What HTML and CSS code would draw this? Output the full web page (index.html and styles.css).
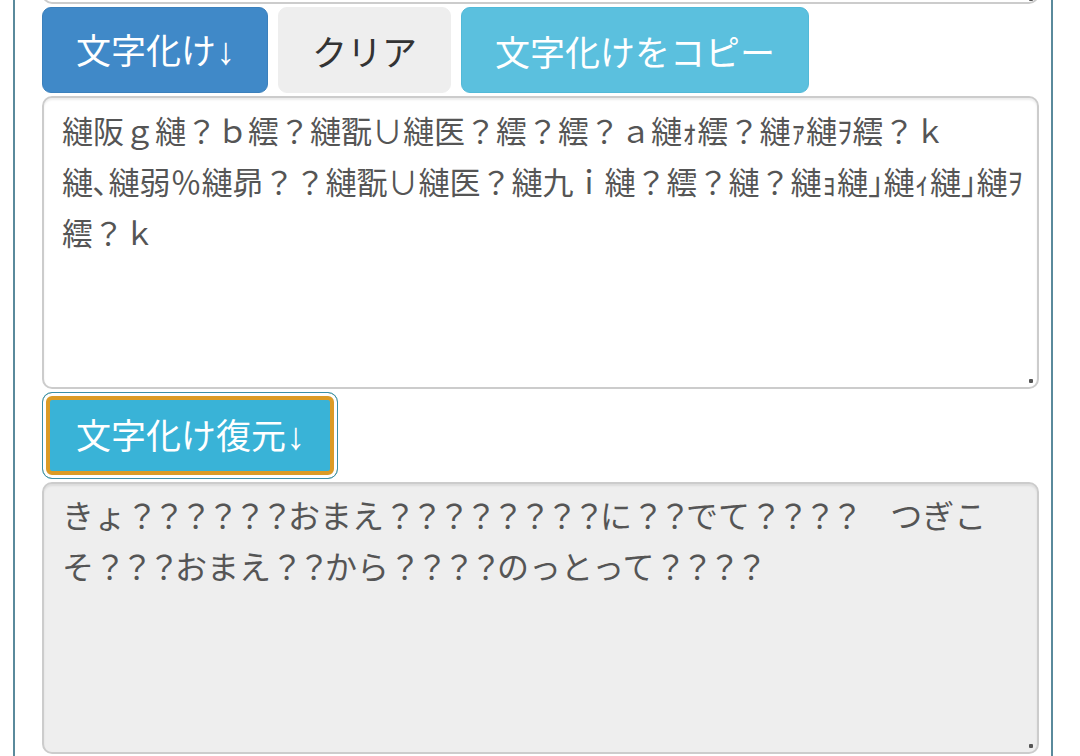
FILE: index.html
```html
<!DOCTYPE html>
<html lang="ja">
<head>
<meta charset="utf-8">
<title>文字化け</title>
<link rel="stylesheet" href="styles.css">
</head>
<body>
<div class="page">
  <div class="panel">
    <div class="field field-prev">
      <textarea class="ta ta-prev" readonly></textarea>
      <span class="grip"></span>
    </div>
    <div class="btn-row">
      <button class="btn btn-primary">文字化け<span class="arrow">↓</span></button>
      <button class="btn btn-default">クリア</button>
      <button class="btn btn-info">文字化けをコピー</button>
    </div>
    <div class="field field-src">
      <textarea class="ta ta-src">縺阪ｇ縺？ｂ繧？縺翫∪縺医？繧？繧？ａ縺ｫ繧？縺ｧ縺ｦ繧？ｋ
縺､縺弱％縺昴？？縺翫∪縺医？縺九ｉ縺？繧？縺？縺ｮ縺｣縺ｨ縺｣縺ｦ
繧？ｋ</textarea>
      <span class="grip"></span>
    </div>
    <div class="btn-row">
      <button class="btn btn-restore">文字化け復元<span class="arrow">↓</span></button>
    </div>
    <div class="field field-out">
      <div class="ta ta-out" role="textbox" aria-readonly="true">きょ<span class="q">？？？？？？</span>おまえ<span class="q">？？？？？？？？</span>に<span class="q">？？</span>でて<span class="q">？？？？</span>　つぎこ<br>そ<span class="q">？？？</span>おまえ<span class="q">？？</span>から<span class="q">？？？？</span>のっとって<span class="q">？？？？</span></div>
      <span class="grip"></span>
    </div>
    <div class="next"></div>
  </div>
</div>
</body>
</html>
```
FILE: styles.css
```css
html, body {
  margin: 0;
  padding: 0;
  background: #ffffff;
  overflow: hidden;
}
body {
  font-family: "Noto Sans CJK JP", "Roboto", sans-serif;
  color: #555555;
}
.page {
  padding-left: 13px;
  width: 1040px;
}
.panel {
  border-left: 2px solid #5a8a9c;
  border-right: 2px solid #5a8a9c;
  padding: 0 12px 0 27px;
  height: 760px;
  display: flex;
  flex-direction: column;
}
.field {
  position: relative;
  flex: none;
}
.ta {
  display: block;
  box-sizing: border-box;
  width: 997px;
  height: 100%;
  margin: 0;
  padding: 6px 8px 6px 18px;
  border: 2px solid #cccccc;
  border-radius: 10px;
  box-shadow: inset 0 2px 2px rgba(0, 0, 0, 0.075);
  font-family: "Noto Sans CJK JP", sans-serif;
  font-size: 31px;
  line-height: 51px;
  color: #555555;
  background: #ffffff;
  resize: none;
  outline: none;
  overflow: hidden;
}
.grip {
  position: absolute;
  right: 6px;
  bottom: 6px;
  width: 4px;
  height: 4px;
  border-radius: 1px;
  background: #555555;
}
.field-prev {
  height: 100px;
  margin-top: -96px;
}
.field-prev .grip {
  bottom: 3px;
}
.field-src {
  height: 293px;
  margin-top: 3px;
}
.field-out {
  height: 272px;
  margin-top: 3px;
}
.ta-out {
  background: #eeeeee;
  white-space: pre-wrap;
  font-size: 32px;
  padding-top: 5px;
}
.q {
  letter-spacing: -5px;
}
.btn-row {
  display: flex;
  gap: 10px;
  margin-top: 3px;
}
.btn {
  box-sizing: border-box;
  height: 86px;
  padding: 0 33px;
  border: 1px solid transparent;
  border-radius: 9px;
  font-family: "Noto Sans CJK JP", sans-serif;
  font-size: 35px;
  line-height: 1;
  color: #ffffff;
  cursor: pointer;
}
.arrow {
  display: inline-block;
  width: 18px;
  text-align: center;
  font-family: "Liberation Sans", "DejaVu Sans", sans-serif;
  font-size: 38px;
  line-height: 1;
}
.btn-primary {
  background: #4089c8;
  border-color: #3b80bc;
}
.btn-default {
  background: #eeeeee;
  border-color: #eeeeee;
  color: #333333;
}
.btn-info {
  background: #5bc0de;
  border-color: #52b9d8;
}
.btn-restore {
  background: #39b3d7;
  border-color: #3a8fa8;
  box-shadow: inset 0 0 0 3px #ffffff, inset 0 0 0 7px #dc9b26;
  border-radius: 10px;
  height: 87px;
}
.next {
  height: 20px;
  margin-top: 2px;
  margin-left: 3px;
  width: 992px;
  background: #d3ebf1;
  flex: none;
}
```
